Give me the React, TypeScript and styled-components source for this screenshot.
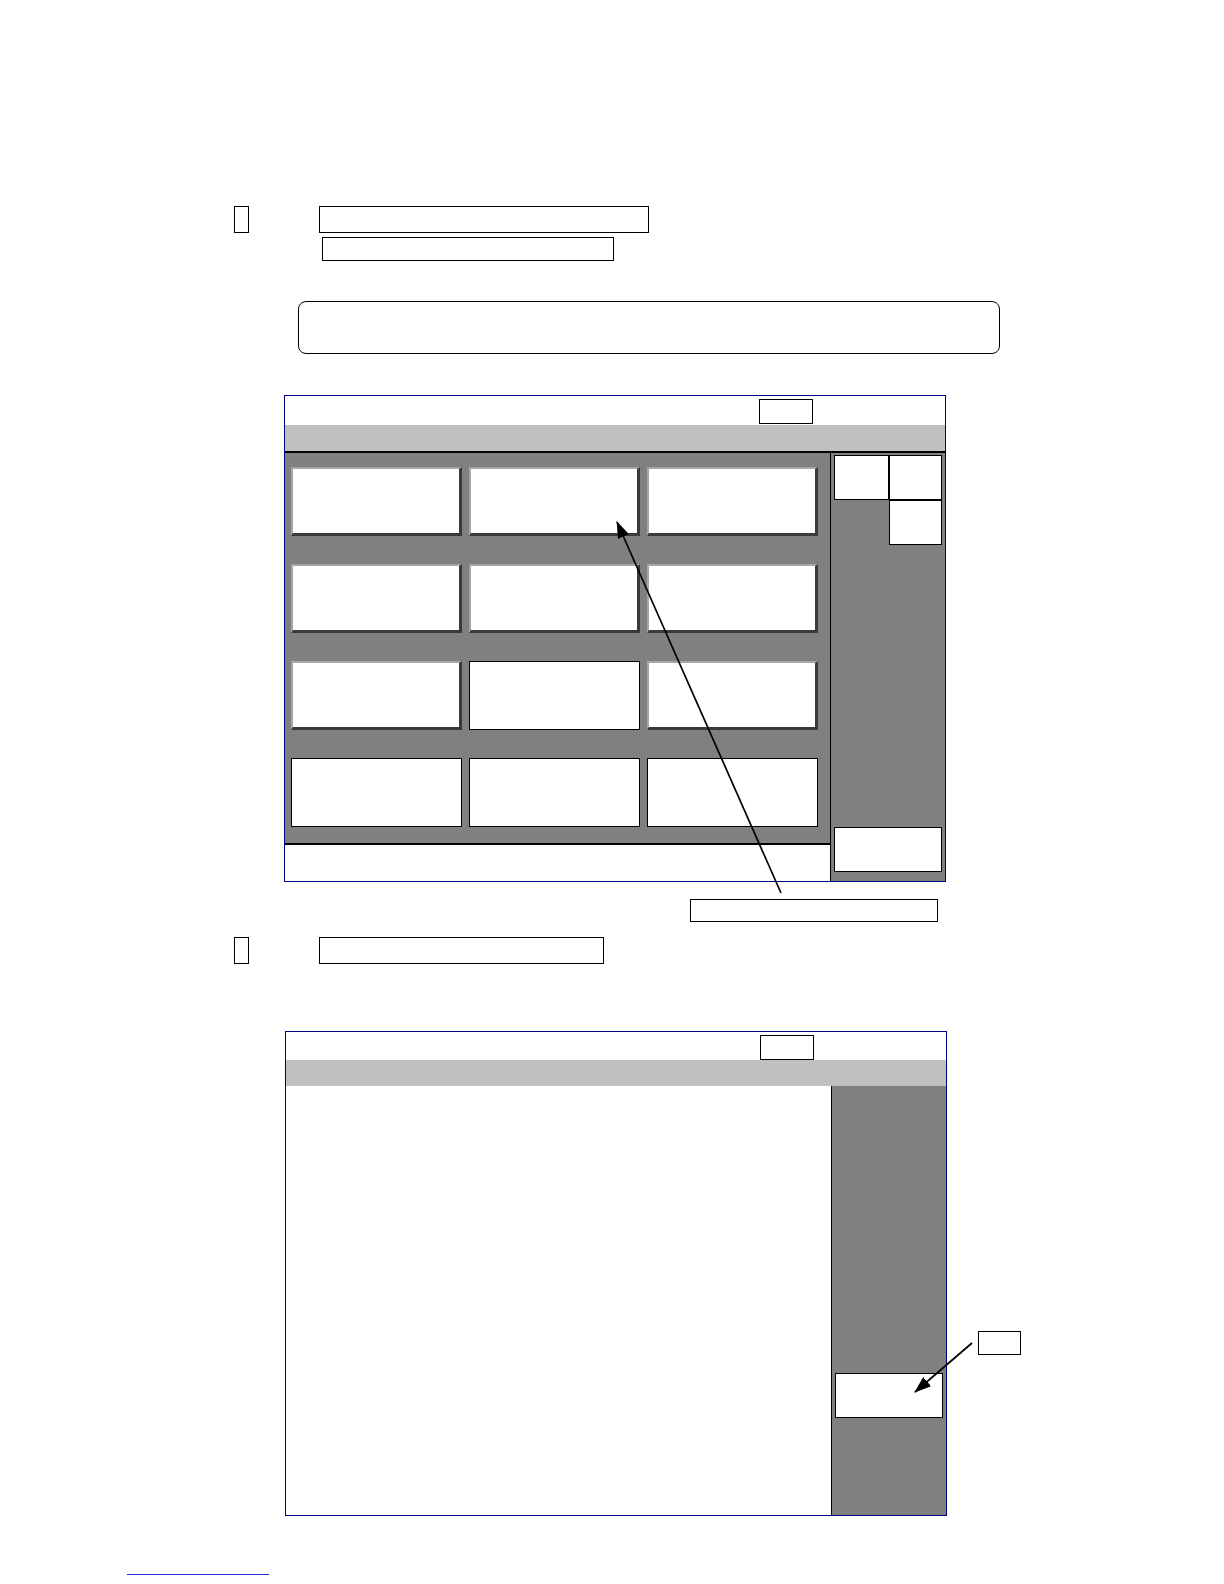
import React from 'react'
import styled, { createGlobalStyle, css } from 'styled-components'

const GlobalStyle = createGlobalStyle`
  html, body {
    margin: 0;
    padding: 0;
    background: #ffffff;
    font-family: "Liberation Sans", Arial, sans-serif;
  }
`

const Page = styled.div`
  position: relative;
  width: 1224px;
  min-height: 1584px;
  padding-top: 206px;
  box-sizing: border-box;
  display: flex;
  flex-direction: column;
  align-items: flex-start;
`

const HeadingRow = styled.div<{ $top?: number }>`
  display: flex;
  align-items: flex-start;
  margin-left: 234px;
  margin-top: ${(p) => p.$top ?? 0}px;
`

const Marker = styled.div`
  width: 15px;
  height: 27px;
  border: 1.5px solid #000;
  box-sizing: border-box;
`

const LabelStack = styled.div`
  display: flex;
  flex-direction: column;
  gap: 4px;
  margin-left: 70px;
`

const LabelBox = styled.div<{ $w: number; $h: number; $indent?: number }>`
  width: ${(p) => p.$w}px;
  height: ${(p) => p.$h}px;
  margin-left: ${(p) => p.$indent ?? 0}px;
  border: 1.5px solid #000;
  box-sizing: border-box;
`

const Notice = styled.div`
  margin-top: 40px;
  margin-left: 298px;
  width: 702px;
  height: 53px;
  border: 1.5px solid #000;
  border-radius: 8px;
  box-sizing: border-box;
`

const Window = styled.div<{ $left: number; $top: number; $h: number }>`
  margin-left: ${(p) => p.$left}px;
  margin-top: ${(p) => p.$top}px;
  width: 662px;
  height: ${(p) => p.$h}px;
  border: 1px solid #000080;
  box-sizing: border-box;
  display: flex;
  flex-direction: column;
`

const TitleBar = styled.div<{ $h: number }>`
  height: ${(p) => p.$h}px;
  background: #ffffff;
  display: flex;
  align-items: flex-start;
  padding-left: 474px;
  padding-top: 3px;
  box-sizing: border-box;
`

const TitleTag = styled.div`
  width: 54px;
  height: 25px;
  border: 1px solid #000;
  box-sizing: border-box;
`

const MenuBar = styled.div`
  height: 26px;
  background: #c0c0c0;
`

const Body = styled.div<{ $ruled?: boolean }>`
  flex: 1;
  display: flex;
  ${(p) =>
    p.$ruled &&
    css`
      border-top: 2px solid #000;
    `}
`

const MainColumn = styled.div`
  width: 545px;
  display: flex;
  flex-direction: column;
`

const KeyGrid = styled.div`
  height: 390px;
  background: #808080;
  display: grid;
  grid-template-columns: repeat(3, 171px);
  grid-template-rows: repeat(4, 69px);
  column-gap: 7px;
  row-gap: 28px;
  padding: 14px 0 16px 6px;
  box-sizing: border-box;
`

const Key = styled.div<{ $raised: boolean }>`
  background: #ffffff;
  box-sizing: border-box;
  ${(p) =>
    p.$raised
      ? css`
          border-style: solid;
          border-width: 2px 3px 3px 2px;
          border-color: #a6a6a6 #3a3a3a #3a3a3a #a6a6a6;
        `
      : css`
          border: 1.5px solid #000;
        `}
`

const StatusBar = styled.div`
  flex: 1;
  background: #ffffff;
  border-top: 2px solid #000;
`

const Blank = styled.div`
  width: 546px;
  background: #ffffff;
`

const SidePanel = styled.div<{ $pad: number }>`
  flex: 1;
  background: #808080;
  border-left: 1px solid #000;
  display: flex;
  flex-direction: column;
  padding: ${(p) => p.$pad}px 3px 9px 3px;
  box-sizing: border-box;
`

const Cluster = styled.div`
  display: grid;
  grid-template-columns: 55px 53px;
  grid-template-rows: 45px 45px;
`

const Cell = styled.div<{ $col: number; $row: number }>`
  grid-column: ${(p) => p.$col};
  grid-row: ${(p) => p.$row};
  background: #ffffff;
  border: 1px solid #000;
  box-sizing: border-box;
`

const PanelButton = styled.div<{ $bottom?: boolean }>`
  width: 108px;
  height: 45px;
  background: #ffffff;
  border: 1.5px solid #000;
  box-sizing: border-box;
  ${(p) =>
    p.$bottom &&
    css`
      margin-top: auto;
    `}
`

const Callout = styled.div<{ $left: number; $w: number; $h: number; $top: number }>`
  margin-left: ${(p) => p.$left}px;
  margin-top: ${(p) => p.$top}px;
  width: ${(p) => p.$w}px;
  height: ${(p) => p.$h}px;
  border: 1.5px solid #000;
  box-sizing: border-box;
  flex-shrink: 0;
`

const WindowRow = styled.div`
  display: flex;
  align-items: flex-start;
`

const FootRule = styled.div`
  margin-top: 58px;
  margin-left: 127px;
  width: 142px;
  height: 1px;
  background: #2a2ad0;
`

const Overlay = styled.svg`
  position: absolute;
  left: 0;
  top: 0;
  pointer-events: none;
`

const keys = [
  [true, true, true],
  [true, true, true],
  [true, false, true],
  [false, false, false],
]

const Arrows = () => (
  <Overlay width={1224} height={1584} viewBox="0 0 1224 1584">
    <defs>
      <marker id="head" markerWidth="17" markerHeight="12" refX="16" refY="6" orient="auto" markerUnits="userSpaceOnUse">
        <path d="M0 0 L17 6 L0 12 Z" fill="#000" />
      </marker>
    </defs>
    <line x1={781} y1={893} x2={617} y2={522} stroke="#000" strokeWidth={1.7} markerEnd="url(#head)" />
    <line x1={972} y1={1343} x2={915} y2={1392} stroke="#000" strokeWidth={1.7} markerEnd="url(#head)" />
  </Overlay>
)

export default function App() {
  return (
    <>
      <GlobalStyle />
      <Page>
        <HeadingRow>
          <Marker />
          <LabelStack>
            <LabelBox $w={330} $h={27} />
            <LabelBox $w={292} $h={24} $indent={3} />
          </LabelStack>
        </HeadingRow>

        <Notice />

        <Window $left={284} $top={41} $h={487}>
          <TitleBar $h={29}>
            <TitleTag />
          </TitleBar>
          <MenuBar />
          <Body $ruled>
            <MainColumn>
              <KeyGrid>
                {keys.flatMap((row, r) =>
                  row.map((raised, c) => <Key key={`${r}-${c}`} $raised={raised} />)
                )}
              </KeyGrid>
              <StatusBar />
            </MainColumn>
            <SidePanel $pad={2}>
              <Cluster>
                <Cell $col={1} $row={1} />
                <Cell $col={2} $row={1} />
                <Cell $col={2} $row={2} />
              </Cluster>
              <PanelButton $bottom />
            </SidePanel>
          </Body>
        </Window>

        <Callout $left={690} $w={248} $h={23} $top={17} />

        <HeadingRow $top={15}>
          <Marker />
          <LabelStack>
            <LabelBox $w={285} $h={27} />
          </LabelStack>
        </HeadingRow>

        <WindowRow>
          <Window $left={285} $top={67} $h={485}>
            <TitleBar $h={28}>
              <TitleTag />
            </TitleBar>
            <MenuBar />
            <Body>
              <Blank />
              <SidePanel $pad={287}>
                <PanelButton />
              </SidePanel>
            </Body>
          </Window>
          <Callout $left={31} $w={43} $h={24} $top={367} />
        </WindowRow>

        <FootRule />
        <Arrows />
      </Page>
    </>
  )
}
